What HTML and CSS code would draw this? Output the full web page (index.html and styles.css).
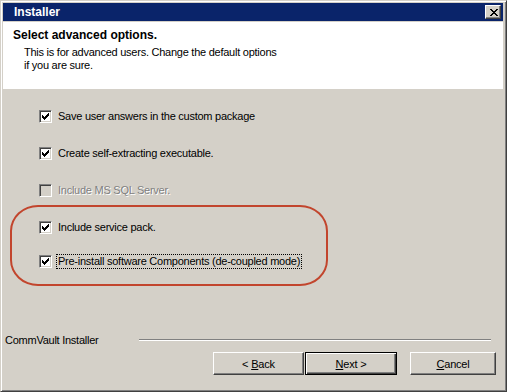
FILE: index.html
```html
<!DOCTYPE html>
<html lang="en">
<head>
    <meta charset="UTF-8">
    <title>Installer</title>
    <link rel="stylesheet" href="styles.css">
</head>
<body>
    <div class="window">
        <div class="titlebar">
            <span class="title">Installer</span>
            <span class="close-btn">
                <svg width="8" height="7" viewBox="0 0 8 7" shape-rendering="crispEdges">
                    <path d="M0 0h2v1h-2z M6 0h2v1h-2z M1 1h2v1h-2z M5 1h2v1h-2z M2 2h4v1h-4z M3 3h2v1h-2z M2 4h4v1h-4z M1 5h2v1h-2z M5 5h2v1h-2z M0 6h2v1h-2z M6 6h2v1h-2z" fill="#000"/>
                </svg>
            </span>
        </div>

        <div class="header">
            <div class="heading">Select advanced options.</div>
            <p class="subtitle">This is for advanced users. Change the default options<br>if you are sure.</p>
        </div>

        <div class="options">
            <div class="option">
                <span class="checkbox"><svg width="7" height="7" viewBox="0 0 7 7" shape-rendering="crispEdges"><path d="M6 0h1v1h-1z M5 1h2v1h-2z M0 2h1v1h-1z M4 2h3v1h-3z M0 3h2v1h-2z M3 3h3v1h-3z M0 4h5v1h-5z M1 5h3v1h-3z M2 6h1v1h-1z" fill="#000"/></svg></span>
                <span class="label">Save user answers in the custom package</span>
            </div>
            <div class="option">
                <span class="checkbox"><svg width="7" height="7" viewBox="0 0 7 7" shape-rendering="crispEdges"><path d="M6 0h1v1h-1z M5 1h2v1h-2z M0 2h1v1h-1z M4 2h3v1h-3z M0 3h2v1h-2z M3 3h3v1h-3z M0 4h5v1h-5z M1 5h3v1h-3z M2 6h1v1h-1z" fill="#000"/></svg></span>
                <span class="label">Create self-extracting executable.</span>
            </div>
            <div class="option disabled">
                <span class="checkbox"></span>
                <span class="label">Include MS SQL Server.</span>
            </div>
            <div class="option">
                <span class="checkbox"><svg width="7" height="7" viewBox="0 0 7 7" shape-rendering="crispEdges"><path d="M6 0h1v1h-1z M5 1h2v1h-2z M0 2h1v1h-1z M4 2h3v1h-3z M0 3h2v1h-2z M3 3h3v1h-3z M0 4h5v1h-5z M1 5h3v1h-3z M2 6h1v1h-1z" fill="#000"/></svg></span>
                <span class="label">Include service pack.</span>
            </div>
            <div class="option tight">
                <span class="checkbox"><svg width="7" height="7" viewBox="0 0 7 7" shape-rendering="crispEdges"><path d="M6 0h1v1h-1z M5 1h2v1h-2z M0 2h1v1h-1z M4 2h3v1h-3z M0 3h2v1h-2z M3 3h3v1h-3z M0 4h5v1h-5z M1 5h3v1h-3z M2 6h1v1h-1z" fill="#000"/></svg></span>
                <span class="label focused">Pre-install software Components (de-coupled mode)</span>
            </div>
        </div>

        <div class="footer">
            <div class="brand-row">
                <span class="brand">CommVault Installer</span>
                <span class="etched"></span>
            </div>
            <div class="buttons">
                <button class="btn back">&lt; <u>B</u>ack</button>
                <button class="btn next default"><u>N</u>ext &gt;</button>
                <button class="btn cancel"><u>C</u>ancel</button>
            </div>
        </div>

        <div class="highlight"></div>
    </div>
</body>
</html>
```

FILE: styles.css
```css
body {
    margin: 0;
    background-color: #d4d0c8;
    font-family: "Liberation Sans", Arial, sans-serif;
    font-size: 11px;
    letter-spacing: -0.25px;
    color: #000;
}
.window {
    position: relative;
    width: 507px;
    height: 392px;
    box-sizing: border-box;
    display: flex;
    flex-direction: column;
    padding: 2px 3px 3px 2px;
    background-color: #d4d0c8;
    border: 1px solid;
    border-color: #d4d0c8 #404040 #404040 #d4d0c8;
    box-shadow: inset 1px 1px #fff, inset -1px -1px #808080;
}
.titlebar {
    height: 18px;
    flex-shrink: 0;
    display: flex;
    align-items: center;
    justify-content: space-between;
    padding: 0 2px 0 11px;
    background-color: #0a246a;
}
.title {
    color: #fff;
    font-weight: bold;
    font-size: 12px;
    letter-spacing: 0;
}
.close-btn {
    width: 16px;
    height: 14px;
    box-sizing: border-box;
    display: flex;
    align-items: center;
    justify-content: center;
    padding-left: 1px;
    background-color: #d4d0c8;
    border: 1px solid;
    border-color: #fff #404040 #404040 #fff;
    box-shadow: inset -1px -1px #808080;
}
.header {
    height: 67px;
    flex-shrink: 0;
    box-sizing: border-box;
    margin-top: 1px;
    padding: 5px 10px 0;
    background-color: #fff;
}
.heading {
    font-size: 12px;
    line-height: 16px;
    font-weight: bold;
    letter-spacing: 0;
}
.subtitle {
    margin: 3px 0 0 11px;
    line-height: 13px;
}
.options {
    flex: 1;
    display: flex;
    flex-direction: column;
    gap: 22px;
    padding: 20px 0 0 36px;
}
.option {
    display: flex;
    align-items: center;
    height: 15px;
}
.option.tight {
    margin-top: -3px;
}
.checkbox {
    width: 13px;
    height: 13px;
    box-sizing: border-box;
    display: flex;
    padding: 2px;
    background-color: #fff;
    border: 1px solid;
    border-color: #808080 #fff #fff #808080;
    box-shadow: inset 1px 1px #404040, inset -1px -1px #d4d0c8;
}
.label {
    margin-left: 4px;
    padding: 0 1px;
    line-height: 13px;
    border: 1px solid transparent;
}
.label.focused {
    border: 1px dotted #000;
}
.disabled .checkbox {
    background-color: #d4d0c8;
}
.disabled .label {
    color: #808080;
    text-shadow: 1px 1px #fff;
}
.footer {
    flex-shrink: 0;
    padding-bottom: 13px;
}
.brand-row {
    display: flex;
    height: 13px;
    line-height: 13px;
    margin-bottom: 5px;
    padding-left: 2px;
}
.etched {
    flex: 1;
    margin: 5px 12px 0 41px;
    height: 0;
    border-top: 1px solid #808080;
    border-bottom: 1px solid #fff;
}
.buttons {
    display: flex;
    justify-content: flex-end;
    padding-right: 7px;
}
.btn {
    height: 23px;
    box-sizing: border-box;
    padding: 0;
    font-family: inherit;
    font-size: 11px;
    letter-spacing: -0.2px;
    color: #000;
    background-color: #d4d0c8;
    border: 1px solid;
    border-color: #fff #404040 #404040 #fff;
    box-shadow: inset -1px -1px #808080;
}
.btn.back {
    width: 91px;
}
.btn.next {
    width: 92px;
    margin-left: 1px;
}
.btn.cancel {
    width: 86px;
    margin-left: 13px;
}
.btn.default {
    border-color: #000;
    box-shadow: inset 1px 1px #fff, inset -1px -1px #404040, inset -2px -2px #808080;
}
.highlight {
    position: absolute;
    left: 9px;
    top: 204px;
    width: 318px;
    height: 81px;
    box-sizing: border-box;
    border: 2px solid #c2452d;
    border-radius: 28px / 26px;
}
```
